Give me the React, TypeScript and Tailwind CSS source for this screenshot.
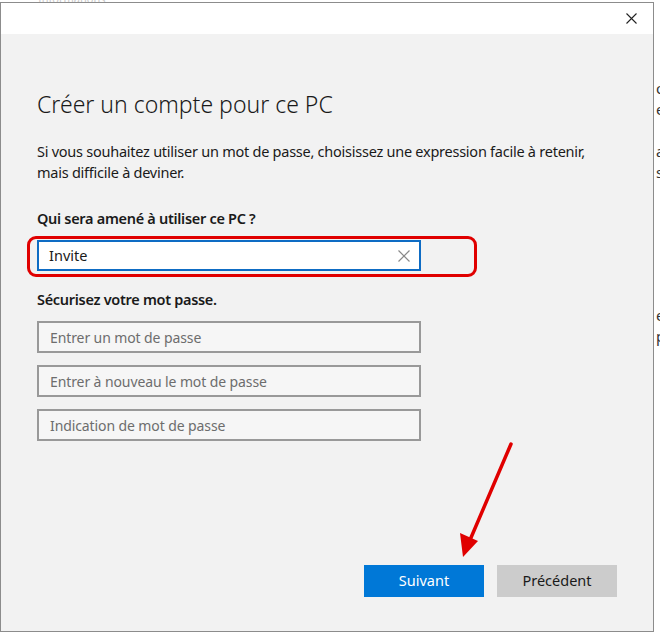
import React from "react";

const font = { fontFamily: '"Noto Sans", "Open Sans", sans-serif' };

function Field({ placeholder }: { placeholder: string }) {
  return (
    <div className="h-[32px] w-[384px] border-2 border-[#999999] bg-[#f6f6f6] flex items-center pl-[11px] text-[14px] tracking-[-0.1px] text-[#6d6d6d]">
      {placeholder}
    </div>
  );
}

export default function App() {
  return (
    <div className="relative w-[660px] h-[634px] bg-white overflow-hidden text-[#1a1a1a]" style={font}>
      {/* faint background fragments */}
      <div className="absolute left-[38px] top-[-9px] text-[11px] text-[#c8c8c8]">Informations</div>
      <div className="absolute left-[656px] top-[78px] text-[15px] leading-[21px] text-[#333]">
        <div>oi</div>
        <div>e</div>
        <div>&nbsp;e</div>
        <div>a</div>
        <div>s</div>
      </div>
      <div className="absolute left-[656px] top-[305px] text-[15px] leading-[21px] text-[#333]">
        <div>e</div>
        <div>p</div>
      </div>

      <div className="relative mt-[2px] w-[654px] h-[630px] border border-[#8c8c8c] flex flex-col bg-[#f2f2f2]">
        <div className="h-[31px] bg-white flex items-center justify-end pr-[16px]">
          <svg width="11" height="11" viewBox="0 0 11 11" className="text-[#222]">
            <path d="M0.5 0.5 L10.5 10.5 M10.5 0.5 L0.5 10.5" stroke="currentColor" strokeWidth="1.1" fill="none" />
          </svg>
        </div>
        <div className="flex flex-col pl-[36px] flex-1">
          <h1 className="mt-[55px] text-[23px] font-light leading-[30px] text-[#1a1a1a]">Créer un compte pour ce PC</h1>
          <p className="mt-[22px] text-[14.5px] leading-[21px] tracking-[-0.25px] text-[#1a1a1a]">
            Si vous souhaitez utiliser un mot de passe, choisissez une expression facile à retenir,
            <br />
            mais difficile à deviner.
          </p>
          <div className="mt-[25px] text-[14.5px] font-semibold leading-[21px] tracking-[-0.3px]">Qui sera amené à utiliser ce PC ?</div>
          <div className="mt-[11px] h-[31px] w-[384px] border-2 border-[#0e6cc4] bg-white flex items-center justify-between pl-[10px] pr-[9px] text-[14.5px] text-[#1a1a1a]">
            <span>Invite</span>
            <svg width="12" height="12" viewBox="0 0 12 12" className="text-[#8a8a8a]">
              <path d="M0.5 0.5 L11.5 11.5 M11.5 0.5 L0.5 11.5" stroke="currentColor" strokeWidth="1.2" fill="none" />
            </svg>
          </div>
          <div className="mt-[18px] text-[14.5px] font-semibold leading-[21px] tracking-[-0.3px]">Sécurisez votre mot passe.</div>
          <div className="mt-[11px] flex flex-col gap-[12px]">
            <Field placeholder="Entrer un mot de passe" />
            <Field placeholder="Entrer à nouveau le mot de passe" />
            <Field placeholder="Indication de mot de passe" />
          </div>
          <div className="mt-auto mb-[34px] flex justify-end gap-[13px] pr-[36px]">
            <div className="w-[120px] h-[32px] bg-[#0078d7] text-white text-[14.5px] flex items-center justify-center">Suivant</div>
            <div className="w-[120px] h-[32px] bg-[#cccccc] text-[#1a1a1a] text-[14.5px] flex items-center justify-center">Précédent</div>
          </div>
        </div>

        {/* red highlight */}
        <div className="absolute left-[26px] top-[233px] w-[450px] h-[41px] border-[3px] border-[#e00000] rounded-[9px] pointer-events-none" />
      </div>

      {/* red arrow */}
      <svg className="absolute left-0 top-0 pointer-events-none" width="660" height="634">
        <line x1="511" y1="444" x2="470" y2="540" stroke="#e00000" strokeWidth="3.5" strokeLinecap="round" />
        <polygon points="463,557 460,533 478,541" fill="#e00000" />
      </svg>
    </div>
  );
}
